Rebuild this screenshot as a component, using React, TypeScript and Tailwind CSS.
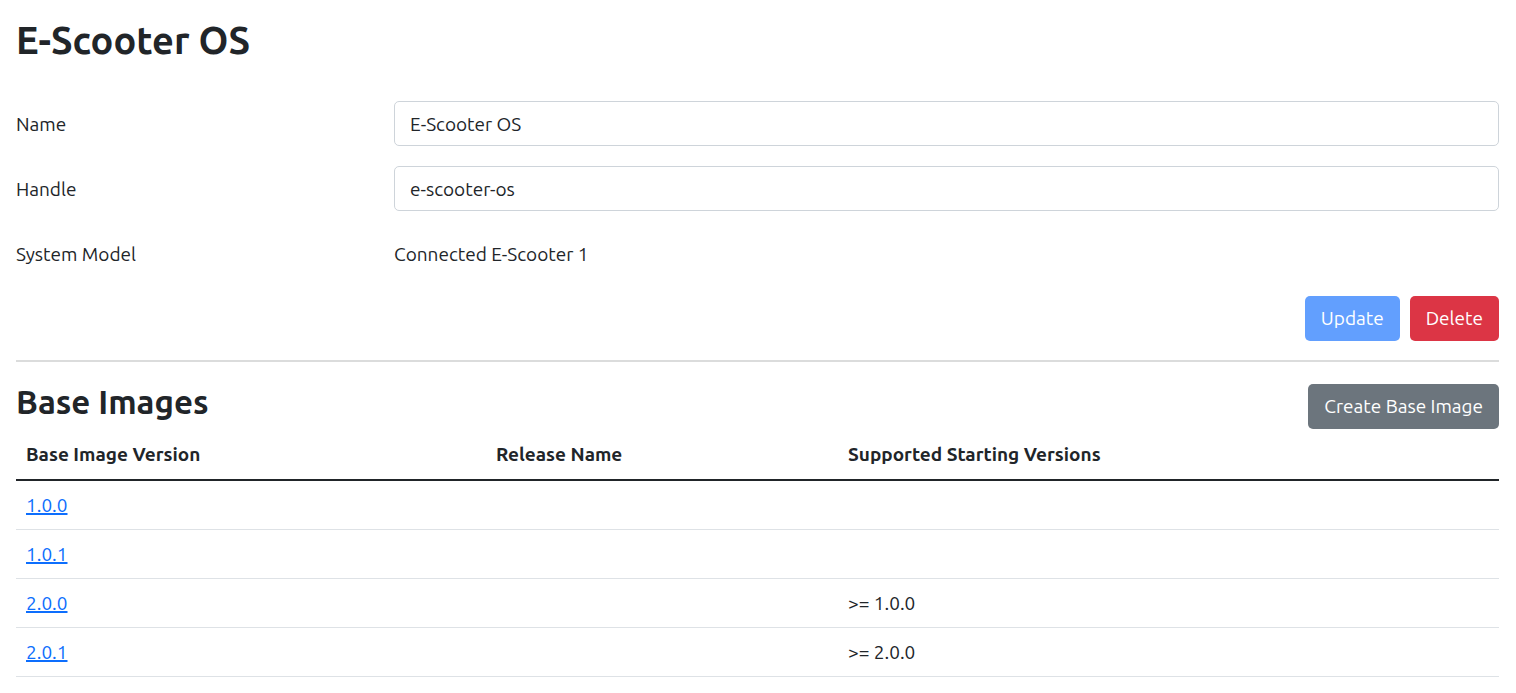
import React from "react";

type BaseImage = { version: string; releaseName: string; supported: string };

const baseImages: BaseImage[] = [
  { version: "1.0.0", releaseName: "", supported: "" },
  { version: "1.0.1", releaseName: "", supported: "" },
  { version: "2.0.0", releaseName: "", supported: ">= 1.0.0" },
  { version: "2.0.1", releaseName: "", supported: ">= 2.0.0" },
];

function TextField({ id, label, value }: { id: string; label: string; value: string }) {
  return (
    <div className="flex items-center">
      <label htmlFor={id} className="w-[378px] shrink-0">{label}</label>
      <input
        id={id}
        type="text"
        defaultValue={value}
        className="h-[45px] min-w-0 flex-1 rounded-[5px] border border-[#ced4da] bg-white px-[15px] outline-none focus:border-[#86b7fe]"
      />
    </div>
  );
}

export default function App() {
  return (
    <main className="bg-white py-4 pl-4 pr-[17px] font-['Ubuntu','Noto_Sans',sans-serif] text-[19px] leading-7 text-[#212529]">
      <h1 className="text-[38px] font-semibold leading-[48px]">E-Scooter OS</h1>
      <form className="mt-[37px] flex flex-col gap-5" onSubmit={(e) => e.preventDefault()}>
        <TextField id="name" label="Name" value="E-Scooter OS" />
        <TextField id="handle" label="Handle" value="e-scooter-os" />
        <div className="flex h-[45px] items-center">
          <span className="w-[378px] shrink-0">System Model</span>
          <span>Connected E-Scooter 1</span>
        </div>
        <div className="flex justify-end gap-[10px]">
          <button type="submit" disabled className="h-[45px] rounded-[5px] bg-[#629ffe] px-4 pb-0.5 text-white">
            Update
          </button>
          <button type="button" className="h-[45px] rounded-[5px] bg-[#dc3545] px-4 pb-0.5 text-white">
            Delete
          </button>
        </div>
      </form>
      <hr className="mt-[19px] border-t-2 border-[#dbdcdc]" />
      <div className="mt-[22px] flex items-start justify-between">
        <h2 className="text-[33px] font-semibold leading-9">Base Images</h2>
        <button type="button" className="h-[45px] rounded-[5px] bg-[#6c757d] px-4 pb-0.5 text-white">
          Create Base Image
        </button>
      </div>
      <table className="w-full table-fixed border-collapse text-left">
        <thead>
          <tr className="h-[51px] border-b-2 border-[#212529]">
            <th className="w-[470px] px-[10px] font-bold">Base Image Version</th>
            <th className="w-[352px] px-[10px] font-bold">Release Name</th>
            <th className="px-[10px] font-bold">Supported Starting Versions</th>
          </tr>
        </thead>
        <tbody>
          {baseImages.map((image) => (
            <tr key={image.version} className="h-[49px] border-b border-[#dee2e6]">
              <td className="px-[10px]">
                <a href={`#${image.version}`} className="text-[#0d6efd] underline decoration-2">
                  {image.version}
                </a>
              </td>
              <td className="px-[10px]">{image.releaseName}</td>
              <td className="px-[10px]">{image.supported}</td>
            </tr>
          ))}
        </tbody>
      </table>
    </main>
  );
}
